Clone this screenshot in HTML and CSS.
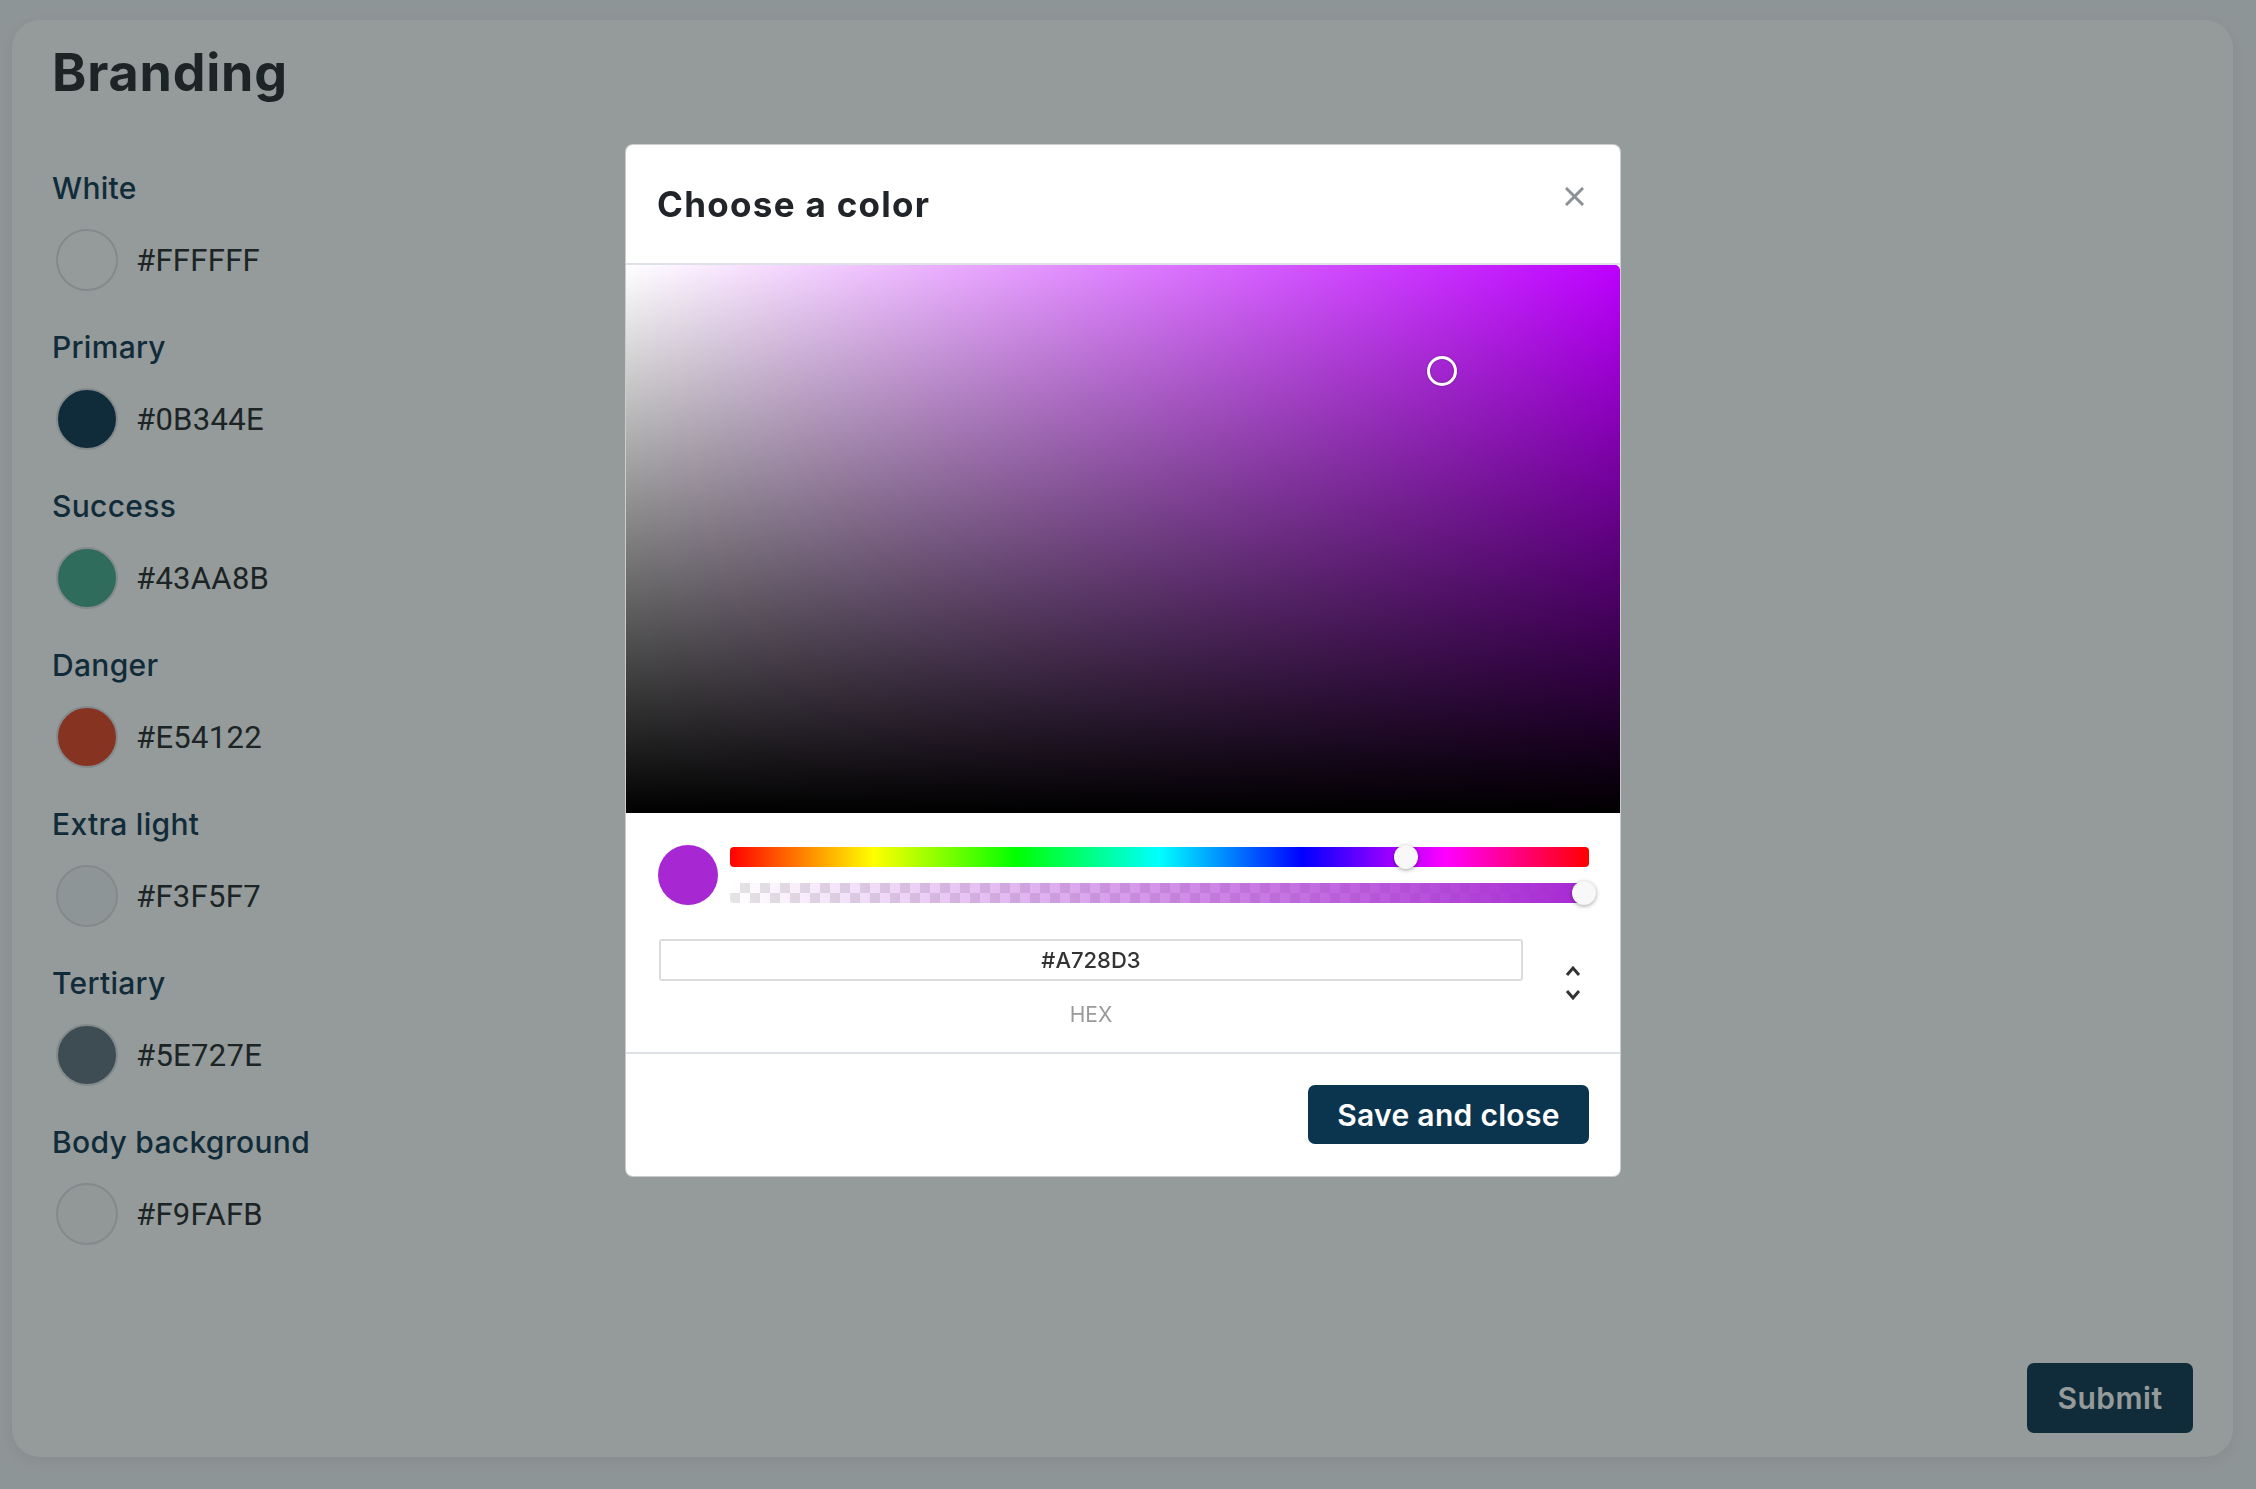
FILE: index.html
```html
<!DOCTYPE html>
<html lang="en">
<head>
<meta charset="utf-8">
<title>Branding</title>
<link rel="stylesheet" href="styles.css">
</head>
<body>
<div class="page">
  <main class="card">
    <h1 class="title">Branding</h1>
    <section class="colors">
      <div class="group">
        <div class="label">White</div>
        <div class="row"><span class="swatch" style="background:#FFFFFF"></span><span class="hex">#FFFFFF</span></div>
      </div>
      <div class="group">
        <div class="label">Primary</div>
        <div class="row"><span class="swatch" style="background:#0B344E"></span><span class="hex">#0B344E</span></div>
      </div>
      <div class="group">
        <div class="label">Success</div>
        <div class="row"><span class="swatch" style="background:#43AA8B"></span><span class="hex">#43AA8B</span></div>
      </div>
      <div class="group">
        <div class="label">Danger</div>
        <div class="row"><span class="swatch" style="background:#E54122"></span><span class="hex">#E54122</span></div>
      </div>
      <div class="group">
        <div class="label">Extra light</div>
        <div class="row"><span class="swatch" style="background:#F3F5F7"></span><span class="hex">#F3F5F7</span></div>
      </div>
      <div class="group">
        <div class="label">Tertiary</div>
        <div class="row"><span class="swatch" style="background:#5E727E"></span><span class="hex">#5E727E</span></div>
      </div>
      <div class="group">
        <div class="label">Body background</div>
        <div class="row"><span class="swatch" style="background:#F9FAFB"></span><span class="hex">#F9FAFB</span></div>
      </div>
    </section>
    <div class="actions"><button class="btn submit">Submit</button></div>
  </main>
</div>

<div class="overlay">
  <div class="modal">
    <header class="modal-header">
      <h2 class="modal-title">Choose a color</h2>
      <button class="close" aria-label="Close">
        <svg width="19" height="19" viewBox="0 0 19 19"><path d="M2 2L17 17M17 2L2 17" stroke="#8c9196" stroke-width="3" stroke-linecap="square" fill="none"/></svg>
      </button>
    </header>
    <div class="saturation">
      <span class="sat-pointer"></span>
    </div>
    <div class="controls">
      <div class="sliders-row">
        <span class="preview"></span>
        <div class="sliders">
          <div class="hue"><span class="thumb hue-thumb"></span></div>
          <div class="alpha"><span class="thumb alpha-thumb"></span></div>
        </div>
      </div>
      <div class="hex-row">
        <div class="hex-field">
          <div class="hex-input">#A728D3</div>
          <div class="hex-label">HEX</div>
        </div>
        <div class="toggle">
          <svg width="18" height="12" viewBox="0 0 18 12"><path d="M3 10L9 3L15 10" stroke="#333" stroke-width="3" fill="none"/></svg>
          <svg width="18" height="12" viewBox="0 0 18 12"><path d="M3 2L9 9L15 2" stroke="#333" stroke-width="3" fill="none"/></svg>
        </div>
      </div>
    </div>
    <footer class="modal-footer">
      <button class="btn save">Save and close</button>
    </footer>
  </div>
</div>
</body>
</html>
```

FILE: styles.css
```css
* { box-sizing: border-box; }
html, body { margin: 0; padding: 0; }
body {
  background: #F3F5F7;
  font-family: "Inter", "Lato", sans-serif;
  color: #212529;
  width: 2256px;
  height: 1489px;
  overflow: hidden;
}
.page {
  padding: 20px 23px 32px 12px;
  height: 1489px;
}
.card {
  height: 100%;
  background: #ffffff;
  border-radius: 28px;
  box-shadow: 0 4px 14px rgba(0,0,0,0.06);
  padding: 23px 40px 24px 40px;
  display: flex;
  flex-direction: column;
}
.title {
  margin: 0 0 65px 0;
  font-size: 52px;
  line-height: 60px;
  font-weight: 700;
  color: #212529;
  letter-spacing: 0.8px;
}
.colors { display: flex; flex-direction: column; }
.group { margin-bottom: 36px; }
.label {
  font-size: 30px;
  line-height: 40px;
  font-weight: 500;
  color: #0B344E;
  margin-bottom: 21px;
  letter-spacing: 0.3px;
}
.row {
  display: flex;
  align-items: center;
  gap: 18px;
  height: 62px;
  padding-left: 4px;
}
.swatch {
  width: 62px;
  height: 62px;
  border-radius: 50%;
  border: 2px solid #dde1e6;
  flex: none;
}
.hex {
  font-family: "Roboto", "Liberation Sans", sans-serif;
  font-size: 31px;
  color: #212529;
  letter-spacing: 0.3px;
}
.actions {
  margin-top: auto;
  display: flex;
  justify-content: flex-end;
}
.btn {
  font-family: "Inter", "Lato", sans-serif;
  background: #0B344E;
  color: #ffffff;
  border: none;
  border-radius: 7px;
  font-weight: 600;
  cursor: pointer;
}
.submit {
  width: 166px;
  height: 70px;
  font-size: 30px;
  letter-spacing: 0.5px;
}

/* overlay + modal */
.overlay {
  position: fixed;
  inset: 0;
  background: rgba(24, 35, 35, 0.46);
  display: flex;
  justify-content: center;
  align-items: flex-start;
  padding: 144px 10px 0 0;
}
.modal {
  width: 996px;
  background: #ffffff;
  border: 1px solid rgba(0,0,0,0.2);
  border-radius: 8px;
  overflow: hidden;
}
.modal-header {
  height: 120px;
  display: flex;
  align-items: center;
  justify-content: space-between;
  padding: 0 36px 0 31px;
  border-bottom: 2px solid #dee2e6;
}
.modal-title {
  margin: 0;
  font-size: 35px;
  font-weight: 700;
  color: #212529;
  letter-spacing: 1.3px;
}
.close {
  align-self: flex-start;
  margin-top: 42px;
  background: none;
  border: none;
  padding: 0;
  width: 19px;
  height: 19px;
  display: flex;
}
.saturation {
  position: relative;
  height: 548px;
  background:
    linear-gradient(to top, #000000, rgba(0,0,0,0)),
    linear-gradient(to right, #ffffff, #bd00ff);
  border-radius: 0 5px 0 0;
}
.sat-pointer {
  position: absolute;
  left: 801px;
  top: 91px;
  width: 30px;
  height: 30px;
  border: 3px solid #ffffff;
  border-radius: 50%;
  box-shadow: 0 0 2px rgba(0,0,0,0.35), inset 0 0 2px rgba(0,0,0,0.35);
}
.controls {
  padding: 32px 0 0 0;
  border-bottom: 2px solid #dee2e6;
}
.sliders-row {
  display: flex;
  align-items: center;
  gap: 12px;
  padding: 0 31px 0 32px;
}
.preview {
  width: 60px;
  height: 60px;
  border-radius: 50%;
  background: #A728D3;
  flex: none;
}
.sliders {
  flex: 1;
  display: flex;
  flex-direction: column;
  gap: 16px;
}
.hue, .alpha {
  position: relative;
  height: 20px;
  border-radius: 4px;
}
.hue {
  background: linear-gradient(to right, #ff0000 0%, #ffff00 16.66%, #00ff00 33.33%, #00ffff 50%, #0000ff 66.66%, #ff00ff 83.33%, #ff0000 100%);
}
.alpha {
  background:
    linear-gradient(to right, rgba(167,40,211,0), #A728D3),
    repeating-conic-gradient(#e4e4e4 0% 25%, #ffffff 0% 50%) 0 0 / 20px 20px;
}
.thumb {
  position: absolute;
  top: 50%;
  width: 24px;
  height: 24px;
  margin-top: -12px;
  border-radius: 50%;
  background: #f8f8f8;
  box-shadow: 0 1px 4px rgba(0,0,0,0.37);
}
.hue-thumb { left: 664px; }
.alpha-thumb { left: 842px; }
.hex-row {
  display: flex;
  align-items: center;
  gap: 41px;
  padding: 34px 38px 25px 33px;
}
.hex-field { flex: 1; }
.hex-input {
  height: 42px;
  border: 2px solid #dcdcdc;
  border-radius: 3px;
  display: flex;
  align-items: center;
  justify-content: center;
  font-size: 22px;
  font-weight: 500;
  color: #333333;
}
.hex-label {
  margin-top: 22px;
  text-align: center;
  font-size: 21px;
  line-height: 24px;
  color: #999999;
}
.toggle {
  width: 18px;
  display: flex;
  flex-direction: column;
  gap: 12px;
}
.toggle svg { display: block; }
.modal-footer {
  display: flex;
  justify-content: flex-end;
  padding: 31px 31px 32px 32px;
}
.save {
  width: 281px;
  height: 59px;
  font-size: 30px;
  letter-spacing: 0.3px;
}
```
